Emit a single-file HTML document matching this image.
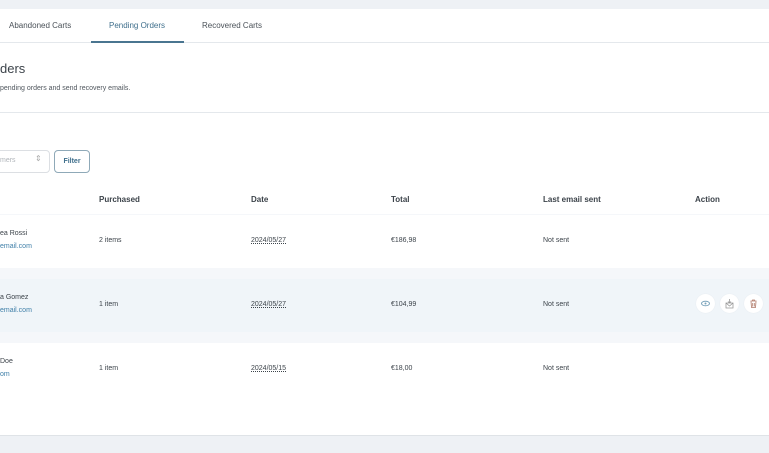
<!DOCTYPE html>
<html><head><style>
body{margin:0;width:769px;height:452px;overflow:hidden;background:#fff;font-family:"Liberation Sans",sans-serif;color:#3c434a;position:relative}
.a{position:absolute}
.t{font-size:8px;white-space:nowrap}
.c{background:#fff;border-radius:50%;width:19px;height:19px;position:absolute;box-shadow:0 0 1px #dde3e8}
</style></head><body>
<div class="a" style="left:0;top:0;width:769px;height:9px;background:#eef1f5"></div>
<div class="a" style="left:0;top:42px;width:769px;height:1px;background:#e4e8ec"></div>
<div class="a t" style="left:9px;top:21px;color:#4a5158">Abandoned Carts</div>
<div class="a t" style="left:109px;top:21px;color:#3f6f8c">Pending Orders</div>
<div class="a" style="left:91px;top:41px;width:93px;height:2px;background:#4a7590"></div>
<div class="a t" style="left:202px;top:21px;color:#4a5158">Recovered Carts</div>
<div class="a" style="left:0;top:61px;font-size:13px;color:#3c434a">ders</div>
<div class="a" style="left:0;top:85px;font-size:7px;color:#50575e">pending orders and send recovery emails.</div>
<div class="a" style="left:0;top:112px;width:769px;height:1px;background:#e4e8ec"></div>
<div class="a" style="left:-10px;top:150px;width:58px;height:21px;border:1px solid #dcdfe3;border-radius:4px"></div>
<div class="a" style="left:0;top:157px;font-size:7px;color:#b0b5ba">mers</div>
<div class="a" style="left:35px;top:154px;font-size:8px;color:#aaa">⇕</div>
<div class="a" style="left:54px;top:150px;width:34px;height:21px;border:1px solid #8fa9b8;border-radius:4px;font-size:7px;font-weight:bold;color:#3f6f8c;text-align:center;line-height:21px">Filter</div>
<div class="a t" style="left:99px;top:195px;font-weight:bold">Purchased</div>
<div class="a t" style="left:251px;top:195px;font-weight:bold">Date</div>
<div class="a t" style="left:391px;top:195px;font-weight:bold">Total</div>
<div class="a t" style="left:543px;top:195px;font-weight:bold">Last email sent</div>
<div class="a t" style="left:695px;top:195px;font-weight:bold">Action</div>
<div class="a" style="left:0;top:214px;width:769px;height:182px;background:#f5f7fa"></div>
<div class="a" style="left:0;top:215px;width:769px;height:53px;background:#fff"></div>
<div class="a" style="left:0;top:279px;width:769px;height:53px;background:#f0f5f9"></div>
<div class="a" style="left:0;top:343px;width:769px;height:53px;background:#fff"></div>
<div class="a t" style="left:0;top:230px;font-size:7px">ea Rossi</div>
<div class="a t" style="left:0;top:243px;font-size:7px;color:#3f7fa8">email.com</div>
<div class="a t" style="left:99px;top:237px;font-size:7px">2 items</div>
<div class="a t" style="left:251px;top:237px;font-size:7px;text-decoration:underline dotted">2024/05/27</div>
<div class="a t" style="left:391px;top:237px;font-size:7px">€186,98</div>
<div class="a t" style="left:543px;top:237px;font-size:7px">Not sent</div>
<div class="a t" style="left:0;top:294px;font-size:7px">a Gomez</div>
<div class="a t" style="left:0;top:307px;font-size:7px;color:#3f7fa8">email.com</div>
<div class="a t" style="left:99px;top:301px;font-size:7px">1 item</div>
<div class="a t" style="left:251px;top:301px;font-size:7px;text-decoration:underline dotted">2024/05/27</div>
<div class="a t" style="left:391px;top:301px;font-size:7px">€104,99</div>
<div class="a t" style="left:543px;top:301px;font-size:7px">Not sent</div>
<div class="c" style="left:696px;top:294px"><svg width="19" height="19"><ellipse cx="9.5" cy="9.5" rx="4" ry="2.3" fill="none" stroke="#7aa3bb"/><circle cx="9.5" cy="9.5" r="1" fill="#7aa3bb"/></svg></div>
<div class="c" style="left:720px;top:294px"><svg width="19" height="19"><path d="M6 9h7v5H6z M6 9l3.5 3 3.5-3 M9.5 5v4 M8 7.5l1.5 1.5 1.5-1.5" fill="none" stroke="#999" stroke-width=".8"/></svg></div>
<div class="c" style="left:744px;top:294px"><svg width="19" height="19"><path d="M6.5 7h6 M8.5 7V6h2v1 M7 7.5l.5 6h4l.5-6 M8.7 9v3.5 M10.3 9v3.5" fill="none" stroke="#b07a6a" stroke-width=".8"/></svg></div>
<div class="a t" style="left:0;top:358px;font-size:7px">Doe</div>
<div class="a t" style="left:0;top:371px;font-size:7px;color:#3f7fa8">om</div>
<div class="a t" style="left:99px;top:365px;font-size:7px">1 item</div>
<div class="a t" style="left:251px;top:365px;font-size:7px;text-decoration:underline dotted">2024/05/15</div>
<div class="a t" style="left:391px;top:365px;font-size:7px">€18,00</div>
<div class="a t" style="left:543px;top:365px;font-size:7px">Not sent</div>
<div class="a" style="left:0;top:435px;width:769px;height:17px;background:#eef1f5;border-top:1px solid #dfe3e7"></div>
</body></html>
